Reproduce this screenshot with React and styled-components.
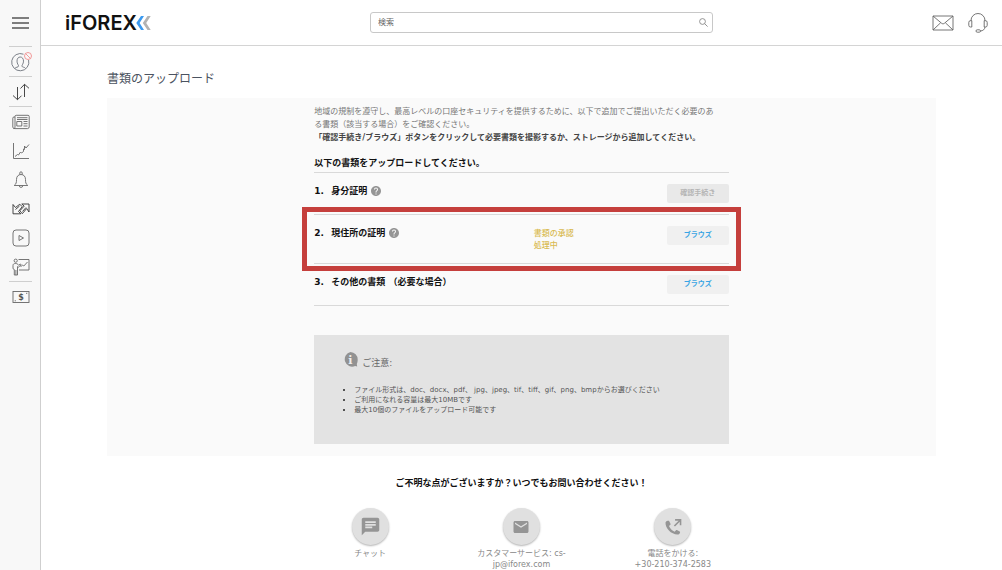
import React from 'react';
import styled, { createGlobalStyle } from 'styled-components';
import { MdChat, MdEmail, MdHelp } from 'react-icons/md';

const red = '#c53f3c';
const blue = '#3aa5e4';
const gold = '#d9bb52';
const line = '#d9d9d9';
const panel = '#fafafa';
const iconGrey = '#959595';

const GlobalStyle = createGlobalStyle`
  * {
    box-sizing: border-box;
  }

  body {
    margin: 0;
    background: #fff;
    color: #666;
    font-family: "DejaVu Sans", "Noto Sans CJK JP", sans-serif;
    font-size: 8px;
  }

  button {
    border: 0;
    padding: 0;
    background: none;
    color: inherit;
    font-family: inherit;
    cursor: pointer;
  }

  svg {
    display: block;
  }
`;

const Page = styled.div`
  display: flex;
  min-height: 100vh;
`;

const Sidebar = styled.nav`
  flex: 0 0 41px;
  padding-left: 1px;
  border-right: 1px solid #cfcfcf;
  background: #f8f8f8;
  display: flex;
  flex-direction: column;
  align-items: center;
`;

const MenuButton = styled.button`
  height: 46px;
  width: 23px;
  display: grid;
  place-items: center;
`;

const SideItem = styled.button`
  width: 23px;
  height: ${({ $divided }) => ($divided ? '30px' : '29px')};
  border-top: ${({ $divided }) => ($divided ? '1px solid #cfcfcf' : '0')};
  display: grid;
  place-items: center;
`;

const LineIcon = styled.svg`
  fill: none;
  stroke: ${({ $colour }) => $colour || '#666'};
  stroke-width: 0.9;
  overflow: visible;
`;

const Content = styled.div`
  flex: 1;
  min-width: 0;
`;

const Header = styled.header`
  height: 46px;
  padding: 0 14px 0 24px;
  border-bottom: 1px solid #d4d4d4;
  display: flex;
  align-items: center;
  justify-content: space-between;
`;

const Logo = styled.a`
  display: flex;
  align-items: center;
  color: #111;
  font-family: Inter, sans-serif;
  font-size: 20px;
  font-weight: 600;
  line-height: 24px;
  text-decoration: none;
`;

const Chevrons = styled.svg`
  margin-left: -2px;
`;

const SearchBox = styled.form`
  flex: 0 1 343px;
  height: 21px;
  padding: 0 4px 0 7px;
  border: 1px solid #c8c8c8;
  border-radius: 3px;
  display: flex;
  align-items: center;
`;

const SearchInput = styled.input`
  flex: 1;
  min-width: 0;
  border: 0;
  padding: 0;
  outline: 0;
  background: none;
  font-family: inherit;
  font-size: 8px;

  &::placeholder {
    color: #666;
    opacity: 1;
  }
`;

const HeaderIcons = styled.div`
  display: flex;
  align-items: center;
  gap: 14px;
`;

const Main = styled.main`
  padding: 24px 66px 0;
`;

const PageTitle = styled.h1`
  margin: 0 0 10px;
  color: #4b5360;
  font-size: 12px;
  font-weight: 400;
  line-height: 18px;
`;

const Panel = styled.section`
  background: ${panel};
  padding: 7px 0 12px;
`;

const Column = styled.div`
  width: 50%;
  min-width: 320px;
  margin: 0 auto;
`;

const Intro = styled.p`
  margin: 0;
  color: #777;
  line-height: 13px;

  strong {
    color: #444;
  }
`;

const SectionTitle = styled.h2`
  margin: 10px 0 0;
  color: #111;
  font-size: 9px;
  line-height: 18px;
`;

const DocumentList = styled.ol`
  margin: 0;
  padding: 0;
  list-style: none;
  border-bottom: 1px solid ${line};
`;

const DocumentRow = styled.li`
  position: relative;
  padding: 11px 0;
  min-height: ${({ $marked }) => ($marked ? '48px' : '41px')};
  border-top: 1px solid ${line};
  display: grid;
  grid-template-columns: 17px 1fr 133px 62px;
  align-items: start;
`;

const Highlight = styled.div`
  position: absolute;
  inset: -8px -12px;
  border: 5px solid ${red};
  pointer-events: none;
`;

const RowText = styled.span`
  color: #111;
  font-size: 9px;
  font-weight: 700;
  line-height: 14px;
`;

const RowTitle = styled(RowText)`
  display: flex;
  align-items: center;
  gap: 3px;
`;

const HelpButton = styled.button`
  color: ${iconGrey};
`;

const Status = styled.span`
  margin-top: 2px;
  width: 46px;
  color: ${gold};
  font-weight: 500;
  line-height: 12px;
`;

const UploadButton = styled.button`
  height: 19px;
  border-radius: 2px;
  background: #f0f0f0;
  color: ${blue};
  font-size: 7px;
  font-weight: 700;
  line-height: 19px;

  &:disabled {
    background: #e9e9e9;
    color: #b5b5b5;
    cursor: default;
  }
`;

const Notice = styled.aside`
  margin-top: 29px;
  padding: 17px 29px 29px;
  background: #e3e3e3;
`;

const NoticeTitle = styled.h3`
  margin: 0 0 14px;
  display: flex;
  align-items: flex-start;
  gap: 4px;
  font-size: 9px;
  font-weight: 400;
  line-height: 16px;

  span {
    padding-top: 3px;
  }
`;

const NoticeList = styled.ul`
  margin: 0;
  padding-left: 11px;
  color: #555;
  font-size: 7px;
  line-height: 10px;

  li::marker {
    color: #222;
  }
`;

const Contact = styled.section`
  padding-top: 18px;
  text-align: center;
`;

const ContactTitle = styled.h2`
  margin: 0 0 16px;
  color: #111;
  font-size: 9px;
  line-height: 18px;
`;

const ContactGrid = styled.div`
  max-width: 454px;
  margin: 0 auto;
  display: grid;
  grid-template-columns: repeat(3, 1fr);
`;

const ContactLink = styled.a`
  padding: 0 29px;
  display: flex;
  flex-direction: column;
  align-items: center;
  gap: 3px;
  color: #888;
  line-height: 11px;
  text-decoration: none;
`;

const Circle = styled.span`
  width: 37px;
  height: 37px;
  border-radius: 50%;
  background: #e0e0e0;
  box-shadow: 0 1px 2px rgba(0, 0, 0, 0.3);
  color: ${iconGrey};
  display: grid;
  place-items: center;
`;

const UserIcon = () => (
  <LineIcon width="20" height="20" viewBox="0 0 20 20" $colour="#6d737c">
    <path d="M12.5 2.2A8.6 8.6 0 1 0 17.6 8" />
    <path d="M4 16.4c.6-1.4 3.4-1 3.6-2.3.1-1-1.6-2.2-1.6-5C6 6.700 7.200 5 9.200 5s3.300 1.700 3.300 4.100c0 2.800-1.700 4-1.600 5 .2 1.300 3 .9 3.600 2.300" />
    <g stroke="#f08f8f">
      <circle cx="17" cy="4" r="3.500" />
      <path d="M14.600 1.600l4.800 4.800" />
    </g>
  </LineIcon>
);

const ArrowsIcon = () => (
  <LineIcon width="18" height="18" viewBox="0 0 18 18" $colour="#333">
    <path d="M5.500 4v12.500M1 12.500l4.500 4.200 4-4M12.500 14V1.300M8.500 5.500l4-4.200 4.500 4" />
  </LineIcon>
);

const NewsIcon = () => (
  <LineIcon width="18" height="16" viewBox="0 0 18 16">
    <path d="M3 3H2a1.200 1.200 0 0 0-1.200 1.200V13A1.800 1.800 0 0 0 3 14.600h12.500a1.800 1.800 0 0 0 1.700-1.700V2.500A1.200 1.200 0 0 0 16 1.300H4.200A1.200 1.200 0 0 0 3 2.500V13c0 1-.8 1.600-1.200 1.600" />
    <path d="M5 3.700h10.500M5 5.500h10.500M4.800 7.500h5v4.500h-5zM11.500 7.500h4M11.500 9.700h4M11.500 12h4" />
  </LineIcon>
);

const ChartIcon = () => (
  <LineIcon width="18" height="18" viewBox="0 0 18 18">
    <path d="M1.500 1v15.500H17" />
    <path d="M3 14.500l2.500-2 1 .5 2-3 1 1 2-1.500V7l1 .5V4l1.500 2L17 2.500" />
  </LineIcon>
);

const BellIcon = () => (
  <LineIcon width="16" height="18" viewBox="0 0 16 18">
    <path d="M1.200 14.500c2-1.500 2.300-3 2.300-6 0-3 1.700-5 4.500-5s4.500 2 4.500 5c0 3 .3 4.500 2.300 6z" />
    <path d="M6.800 3.500V2a1.200 1.200 0 0 1 2.400 0v1.500M6.300 14.700a1.700 1.700 0 0 0 3.400 0" />
  </LineIcon>
);

const TradeIcon = () => (
  <LineIcon width="18" height="12" viewBox="0 0 18 12" $colour="#333">
    <path d="M1 1.500V10.800h7.800L6.500 8.500l3.700-4.800L7.800 1.200 3.500 4.500z" />
    <path d="M17 9V1H9.800l2.400 2.100-4.400 4.700 2.500 2.900 4.400-5.200z" />
    <path d="M3.500 6.500l4-3.500M10.500 8.500l3.500-4" />
  </LineIcon>
);

const PlayIcon = () => (
  <LineIcon width="18" height="18" viewBox="0 0 18 18">
    <rect x="1" y="1" width="16" height="16" rx="3" />
    <path d="M7 6.500v5L11.500 9z" />
  </LineIcon>
);

const TeacherIcon = () => (
  <LineIcon width="18" height="18" viewBox="0 0 18 18">
    <circle cx="3.700" cy="2.700" r="1.600" />
    <path d="M2.300 17V11.500L1 10.700V7.500C1 6 2 5.500 3.700 5.500c1.300 0 2 .5 2.800 1.700L8.500 6l.6.900-2.800 2.300-.8-.6V17H2.300M3.900 12v5" />
    <path d="M6.500 1.500H17v10.500H7" />
    <path d="M8.500 9l2-2 1.300 1L15.500 4" />
  </LineIcon>
);

const MoneyIcon = () => (
  <LineIcon width="18" height="12" viewBox="0 0 18 12">
    <rect x="1" y="0.500" width="16" height="11" />
    <path d="M2.700 9.800h1.200M14 2.300h1.300" />
    <text x="9" y="9" textAnchor="middle" fontSize="8" fontWeight="700" fill="#555" stroke="none">$</text>
  </LineIcon>
);

const CallIcon = () => (
  <svg width="20" height="20" viewBox="0 0 24 24" fill="currentColor">
    <path d="M5.500 4.500c-.8.100-2.300 1-2.500 2.200C2.700 13.500 9.500 21 17.500 21c1.500 0 2.700-1.200 3-2.500.1-.5-.1-.8-.5-1l-3.300-1.800c-.4-.2-.8-.1-1.100.2l-1.600 1.800c-3-1.200-5.600-3.700-6.800-6.800l1.600-1.500c.3-.3.400-.6.300-1L7.500 5c-.2-.4-.500-.6-1-.5z" />
    <path d="M14.500 2.500H22V10h-1.900V5.800l-5.700 5.700-1.400-1.400 5.700-5.700h-4.200z" />
  </svg>
);

const InfoIcon = () => (
  <svg width="15" height="15" viewBox="0 0 15 15">
    <path d="M7.500 0a7.500 7.500 0 0 1 7.200 7.500c0 2-.5 3.600-.9 4.600l.4 2.400-2.100-.5A7.400 7.400 0 1 1 7.500 0z" fill="#929292" />
    <text x="7.300" y="11.500" textAnchor="middle" fontFamily="DejaVu Serif" fontWeight="700" fontSize="11" fill="#eee">i</text>
  </svg>
);

const sideItems = [
  { label: 'アカウント', Icon: UserIcon, divided: true },
  { label: '取引', Icon: ArrowsIcon, divided: true },
  { label: 'ニュース', Icon: NewsIcon, divided: true },
  { label: 'チャート', Icon: ChartIcon },
  { label: 'アラート', Icon: BellIcon },
  { label: 'トレンド', Icon: TradeIcon },
  { label: 'ビデオ', Icon: PlayIcon },
  { label: '学習', Icon: TeacherIcon },
  { label: '入金', Icon: MoneyIcon, divided: true },
];

const documents = [
  { title: '身分証明', help: true, action: '確認手続き', disabled: true },
  { title: '現住所の証明', help: true, status: '書類の承認処理中', action: 'ブラウズ', marked: true },
  { title: 'その他の書類 （必要な場合）', action: 'ブラウズ' },
];

const App = () => {
  const rows = documents.map((d, i) => (
    <DocumentRow key={d.title} $marked={d.marked}>
      <RowText>{i + 1}.</RowText>
      <RowTitle>
        {d.title}
        {d.help && <HelpButton aria-label="ヘルプ"><MdHelp size={12} /></HelpButton>}
      </RowTitle>
      <Status>{d.status}</Status>
      <UploadButton type="button" disabled={d.disabled}>{d.action}</UploadButton>
      {d.marked && <Highlight />}
    </DocumentRow>
  ));

  return (
    <Page lang="ja">
      <GlobalStyle />
      <Sidebar>
        <MenuButton aria-label="メニュー">
          <LineIcon width="17" height="12" viewBox="0 0 17 12" $colour="#555">
            <path d="M0 1h17M0 6h17M0 11h17" strokeWidth="1.300" />
          </LineIcon>
        </MenuButton>
        {sideItems.map(({ label, Icon, divided }) => (
          <SideItem key={label} aria-label={label} $divided={divided}><Icon /></SideItem>
        ))}
      </Sidebar>

      <Content>
        <Header>
          <Logo href="#">
            iFOREX
            <Chevrons width="16" height="16" viewBox="0 0 16 16">
              <path d="M6 1h3L4.600 8l4.400 7H6L1.300 8z" fill="#3b9af0" />
              <path d="M12.500 1h3.200l-4.500 7 4.500 7h-3.200L7.800 8z" fill="#b3b3b3" />
            </Chevrons>
          </Logo>
          <SearchBox role="search">
            <SearchInput type="text" aria-label="検索" placeholder="検索" />
            <LineIcon width="9" height="9" viewBox="0 0 9 9" $colour="#888">
              <circle cx="3.500" cy="3.500" r="2.900" />
              <path d="M5.600 5.600l3 3" />
            </LineIcon>
          </SearchBox>
          <HeaderIcons>
            <button aria-label="メッセージ">
              <LineIcon width="22" height="16" viewBox="0 0 22 16">
                <path d="M1 1h20v14H1zM1 1l8.500 7.200c.9.800 2.100.8 3 0L21 1M1 15l7.700-7.300M21 15l-7.700-7.300" />
              </LineIcon>
            </button>
            <button aria-label="サポート">
              <LineIcon width="20" height="20" viewBox="0 0 20 20">
                <path d="M3 8V7.500a7 7 0 0 1 14 0V8M3.800 7.700v6.300H2.500A1.700 1.700 0 0 1 .8 12.300V9.400a1.700 1.700 0 0 1 1.700-1.700zM16.200 7.700v6.300h1.300a1.700 1.700 0 0 0 1.700-1.700V9.400a1.700 1.700 0 0 0-1.700-1.700zM17 14c-.3 2.500-2 3.800-4.500 4" />
                <rect x="8" y="16.800" width="4.500" height="2.400" rx="1.200" />
              </LineIcon>
            </button>
          </HeaderIcons>
        </Header>

        <Main>
          <PageTitle>書類のアップロード</PageTitle>
          <Panel>
            <Column>
              <Intro>
                地域の規制を遵守し、最高レベルの口座セキュリティを提供するために、以下で追加でご提出いただく必要のあ
                <br />
                る書類（該当する場合）をご確認ください。
                <br />
                <strong>「確認手続き/ブラウズ」ボタンをクリックして必要書類を撮影するか、ストレージから追加してください。</strong>
              </Intro>
              <SectionTitle>以下の書類をアップロードしてください。</SectionTitle>
              <DocumentList>{rows}</DocumentList>

              <Notice>
                <NoticeTitle><InfoIcon /><span>ご注意:</span></NoticeTitle>
                <NoticeList>
                  <li>ファイル形式は、doc、docx、pdf、 jpg、jpeg、tif、tiff、gif、png、bmpからお選びください</li>
                  <li>ご利用になれる容量は最大10MBです</li>
                  <li>最大10個のファイルをアップロード可能です</li>
                </NoticeList>
              </Notice>
            </Column>
          </Panel>

          <Contact>
            <ContactTitle>ご不明な点がございますか？いつでもお問い合わせください！</ContactTitle>
            <ContactGrid>
              <ContactLink href="#chat">
                <Circle><MdChat size={21} /></Circle>
                チャット
              </ContactLink>
              <ContactLink href="mailto:cs-jp@iforex.com">
                <Circle><MdEmail size={18} /></Circle>
                カスタマーサービス: cs-jp@iforex.com
              </ContactLink>
              <ContactLink href="tel:+302103742583">
                <Circle><CallIcon /></Circle>
                <span>電話をかける:<br />+30-210-374-2583</span>
              </ContactLink>
            </ContactGrid>
          </Contact>
        </Main>
      </Content>
    </Page>
  );
};

export default App;
